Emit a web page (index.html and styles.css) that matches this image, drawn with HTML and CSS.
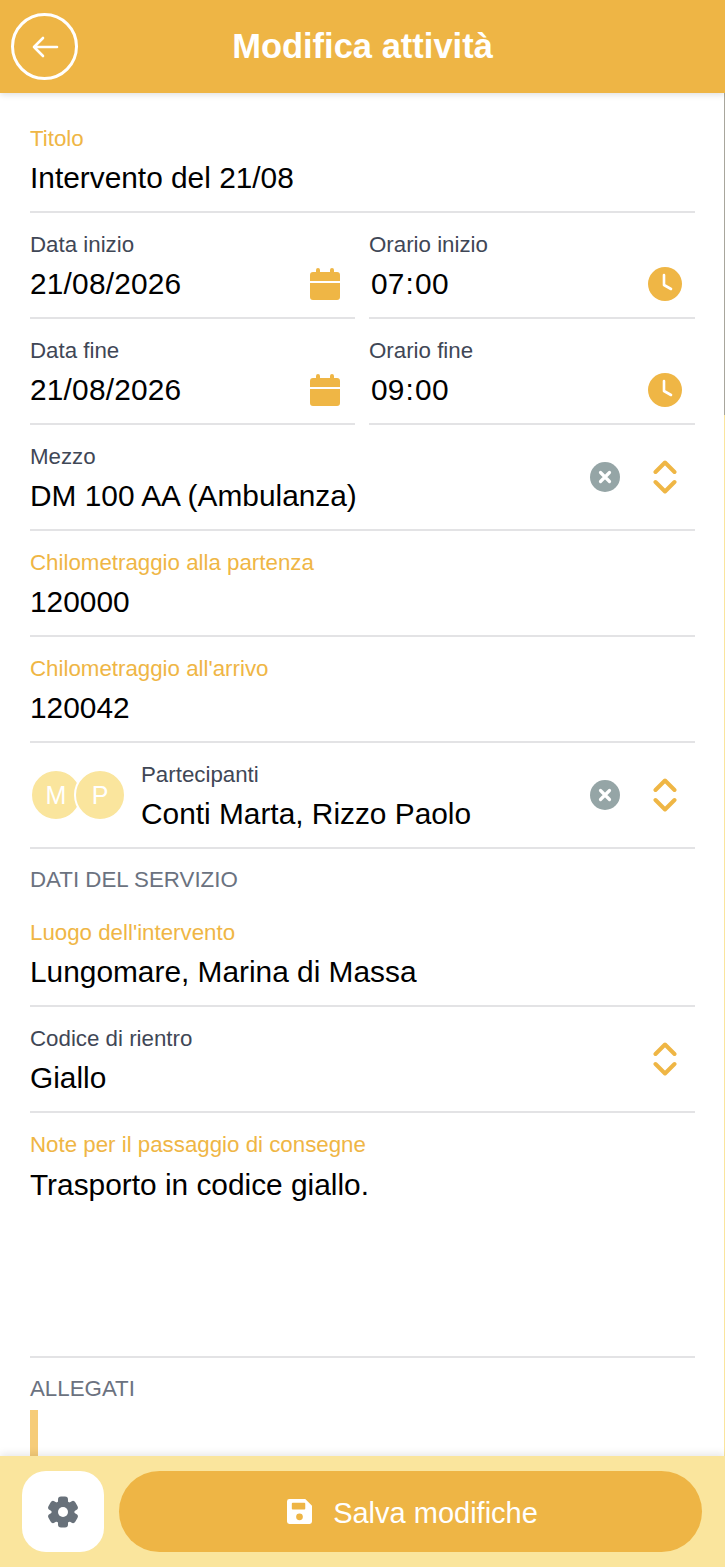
FILE: index.html
```html
<!DOCTYPE html>
<html lang="it">
<head>
  <meta charset="UTF-8">
  <title>Modifica attività</title>
  <link rel="stylesheet" href="styles.css">
</head>
<body>
  <div class="screen">
    <header class="topbar">
      <button class="back-btn">
        <svg viewBox="0 0 28 24" width="28" height="24"><path d="M26 12H3M12 3l-9 9 9 9" fill="none" stroke="#fff" stroke-width="2.6" stroke-linecap="round" stroke-linejoin="round"/></svg>
      </button>
      <h1 class="page-title">Modifica attività</h1>
    </header>

    <main class="content">
      <div class="field">
        <div class="label accent">Titolo</div>
        <div class="value-row"><div class="value">Intervento del 21/08</div></div>
      </div>

      <div class="two-col">
        <div class="field">
          <div class="label">Data inizio</div>
          <div class="value-row">
            <div class="value date">21/08/2026</div>
            <svg class="ico-cal" viewBox="0 0 30 32" width="30" height="32"><path fill="#efb645" d="M0 15h30v14a3 3 0 0 1-3 3H3a3 3 0 0 1-3-3zM3 4h3V2a2 2 0 0 1 4 0v2h10V2a2 2 0 0 1 4 0v2h3a3 3 0 0 1 3 3v6H0V7a3 3 0 0 1 3-3z"/></svg>
          </div>
        </div>
        <div class="field">
          <div class="label">Orario inizio</div>
          <div class="value-row">
            <div class="value time">07<span class="colon">:</span>00</div>
            <svg class="ico-clock" viewBox="0 0 34 34" width="34" height="34"><circle cx="17" cy="17" r="17" fill="#efb645"/><path d="M16 8v10l7 4" fill="none" stroke="#fff" stroke-width="2.6" stroke-linecap="round" stroke-linejoin="round"/></svg>
          </div>
        </div>
      </div>

      <div class="two-col">
        <div class="field">
          <div class="label">Data fine</div>
          <div class="value-row">
            <div class="value date">21/08/2026</div>
            <svg class="ico-cal" viewBox="0 0 30 32" width="30" height="32"><path fill="#efb645" d="M0 15h30v14a3 3 0 0 1-3 3H3a3 3 0 0 1-3-3zM3 4h3V2a2 2 0 0 1 4 0v2h10V2a2 2 0 0 1 4 0v2h3a3 3 0 0 1 3 3v6H0V7a3 3 0 0 1 3-3z"/></svg>
          </div>
        </div>
        <div class="field">
          <div class="label">Orario fine</div>
          <div class="value-row">
            <div class="value time">09<span class="colon">:</span>00</div>
            <svg class="ico-clock" viewBox="0 0 34 34" width="34" height="34"><circle cx="17" cy="17" r="17" fill="#efb645"/><path d="M16 8v10l7 4" fill="none" stroke="#fff" stroke-width="2.6" stroke-linecap="round" stroke-linejoin="round"/></svg>
          </div>
        </div>
      </div>

      <div class="field select">
        <div class="select-main">
          <div class="label">Mezzo</div>
          <div class="value-row"><div class="value">DM 100 AA (Ambulanza)</div></div>
        </div>
        <svg class="ico-clear" viewBox="0 0 30 30" width="30" height="30"><circle cx="15" cy="15" r="15" fill="#95a5a6"/><path d="M10.5 10.5l9 9M19.500 10.500l-9 9" stroke="#fff" stroke-width="3.200" stroke-linecap="round"/></svg>
        <svg class="ico-updown" viewBox="0 0 24 34" width="24" height="34"><path d="M2.500 12L12 2.500l9.500 9.500M2.500 22l9.500 9.500 9.500-9.500" fill="none" stroke="#efb645" stroke-width="4" stroke-linecap="round" stroke-linejoin="round"/></svg>
      </div>

      <div class="field">
        <div class="label accent">Chilometraggio alla partenza</div>
        <div class="value-row"><div class="value">120000</div></div>
      </div>

      <div class="field">
        <div class="label accent">Chilometraggio all'arrivo</div>
        <div class="value-row"><div class="value">120042</div></div>
      </div>

      <div class="field select">
        <div class="avatars">
          <div class="avatar">M</div>
          <div class="avatar">P</div>
        </div>
        <div class="select-main">
          <div class="label">Partecipanti</div>
          <div class="value-row"><div class="value">Conti Marta, Rizzo Paolo</div></div>
        </div>
        <svg class="ico-clear" viewBox="0 0 30 30" width="30" height="30"><circle cx="15" cy="15" r="15" fill="#95a5a6"/><path d="M10.5 10.5l9 9M19.500 10.500l-9 9" stroke="#fff" stroke-width="3.200" stroke-linecap="round"/></svg>
        <svg class="ico-updown" viewBox="0 0 24 34" width="24" height="34"><path d="M2.500 12L12 2.500l9.500 9.500M2.500 22l9.500 9.500 9.500-9.500" fill="none" stroke="#efb645" stroke-width="4" stroke-linecap="round" stroke-linejoin="round"/></svg>
      </div>

      <div class="section-title first">Dati del servizio</div>

      <div class="field">
        <div class="label accent">Luogo dell'intervento</div>
        <div class="value-row"><div class="value">Lungomare, Marina di Massa</div></div>
      </div>

      <div class="field select">
        <div class="select-main">
          <div class="label">Codice di rientro</div>
          <div class="value-row"><div class="value">Giallo</div></div>
        </div>
        <svg class="ico-updown" viewBox="0 0 24 34" width="24" height="34"><path d="M2.500 12L12 2.500l9.500 9.500M2.500 22l9.500 9.500 9.500-9.500" fill="none" stroke="#efb645" stroke-width="4" stroke-linecap="round" stroke-linejoin="round"/></svg>
      </div>

      <div class="field notes">
        <div class="label accent">Note per il passaggio di consegne</div>
        <div class="value">Trasporto in codice giallo.</div>
      </div>

      <div class="section-title">Allegati</div>
      <div class="attachment"></div>
    </main>

    <footer class="bottombar">
      <button class="settings-btn">
        <svg viewBox="0 0 32 32" width="32" height="32">
          <g fill="#68717a">
            <rect x="11" y="0.500" width="10" height="31" rx="3"/>
            <rect x="11" y="0.500" width="10" height="31" rx="3" transform="rotate(60 16 16)"/>
            <rect x="11" y="0.500" width="10" height="31" rx="3" transform="rotate(120 16 16)"/>
            <circle cx="16" cy="16" r="11.500"/>
          </g>
          <circle cx="16" cy="16" r="5" fill="#fff"/>
        </svg>
      </button>
      <button class="save-btn">
        <svg viewBox="0 0 26 26" width="25" height="25"><path fill="#fff" fill-rule="evenodd" d="M2.500 0h16.500l7 7v16.500a2.500 2.500 0 0 1-2.500 2.500h-21a2.500 2.500 0 0 1-2.500-2.500v-21a2.500 2.500 0 0 1 2.500-2.500zm3.500 4a1 1 0 0 0-1 1v5a1 1 0 0 0 1 1h12a1 1 0 0 0 1-1v-5a1 1 0 0 0-1-1zm7 11a3.500 3.500 0 1 0 0 7 3.500 3.500 0 0 0 0-7z"/></svg>
        <span class="save-text">Salva modifiche</span>
      </button>
    </footer>
  </div>
</body>
</html>
```

FILE: styles.css
```css
* { box-sizing: border-box; }
html, body { margin: 0; height: 100%; }
body {
  font-family: 'Liberation Sans', Arial, sans-serif;
  background: #fff;
  color: #000;
}
button {
  font: inherit;
  border: 0;
  cursor: pointer;
}

.screen {
  position: relative;
  height: 1567px;
  display: flex;
  flex-direction: column;
  overflow: hidden;
}
/* thin edge line on the right of the scroll area */
.screen::before,
.screen::after {
  content: "";
  position: absolute;
  right: 0;
  width: 1px;
}
.screen::before {
  top: 93px;
  height: 322px;
  background: #a8a69c;
}
.screen::after {
  top: 415px;
  bottom: 111px;
  background: #fae59d;
}

.topbar {
  flex: none;
  height: 93px;
  display: flex;
  align-items: center;
  justify-content: center;
  position: relative;
  background: #eeb545;
  box-shadow: 0 2px 6px rgba(0, 0, 0, 0.12);
  z-index: 2;
}
.back-btn {
  position: absolute;
  left: 11px;
  top: 13px;
  width: 67px;
  height: 67px;
  display: flex;
  align-items: center;
  justify-content: center;
  background: transparent;
  border: 3px solid #fff;
  border-radius: 50%;
  padding: 0;
}
.page-title {
  margin: 0;
  font-size: 34.500px;
  font-weight: bold;
  color: #fff;
}

.content {
  flex: 1;
  min-height: 0;
  overflow: hidden;
  padding: 14px 30px 0;
}
.field {
  height: 106px;
  padding-top: 19px;
  border-bottom: 2px solid #e3e3e5;
}
.label {
  font-size: 22.300px;
  line-height: 26px;
  color: #3f4756;
}
.label.accent { color: #efb645; }
.value-row {
  display: flex;
  align-items: center;
  justify-content: space-between;
  margin-top: 6px;
  height: 40px;
}
.value {
  font-size: 29.850px;
  line-height: 40px;
  color: #000;
}
.date { letter-spacing: 0.2px; }
.time { padding-left: 2px; letter-spacing: 0.2px; }
.colon { margin: 0 1px; }

.two-col {
  display: grid;
  grid-template-columns: 325px 326px;
  gap: 14px;
}
.ico-cal { margin-right: 15px; }
.ico-clock { margin-right: 13px; }

.select {
  display: flex;
  align-items: center;
  padding-top: 0;
}
.select-main { flex: 1; min-width: 0; padding-top: 6px; }
.ico-clear { flex: none; margin-right: 33px; }
.ico-updown { flex: none; margin-right: 18px; }

.avatars {
  display: flex;
  margin-right: 15px;
}
.avatar {
  width: 52px;
  height: 52px;
  border: 2px solid #fff;
  border-radius: 50%;
  background: #fae59d;
  color: #fff;
  font-size: 25px;
  line-height: 48px;
  text-align: center;
}
.avatar + .avatar { margin-left: -8px; }

.section-title {
  font-size: 22.300px;
  line-height: 26px;
  color: #6b7280;
  text-transform: uppercase;
  padding-top: 18px;
}
.section-title.first { margin-bottom: 8px; }
.notes { height: 245px; }
.notes .value { margin-top: 7px; }
.attachment {
  width: 8px;
  height: 60px;
  margin-top: 8px;
  background: #f6cc79;
}

.bottombar {
  flex: none;
  height: 111px;
  display: flex;
  gap: 15px;
  padding: 15px 23px 15px 22px;
  background: #fae59d;
  box-shadow: 0 -2px 8px rgba(0, 0, 0, 0.1);
  z-index: 2;
}
.settings-btn {
  flex: none;
  width: 82px;
  height: 81px;
  display: flex;
  align-items: center;
  justify-content: center;
  background: #fff;
  border-radius: 24px;
  padding: 0;
}
.save-btn {
  flex: 1;
  height: 81px;
  display: flex;
  align-items: center;
  justify-content: center;
  gap: 21px;
  background: #eeb545;
  border-radius: 41px;
  color: #fff;
  font-size: 29px;
  padding: 0 0 0 4px;
}
.save-text { margin-top: 4px; }
```
